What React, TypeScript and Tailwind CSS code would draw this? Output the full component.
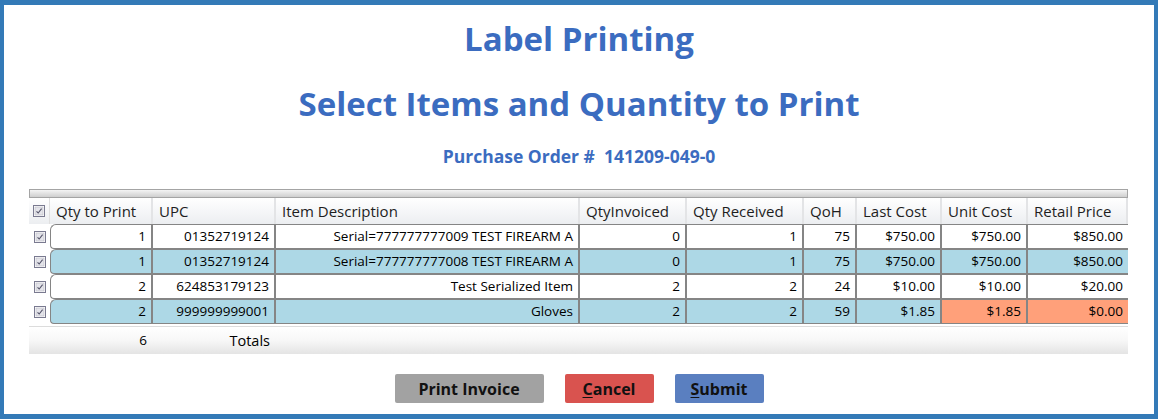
import React from "react";

const font = { fontFamily: '"Open Sans", "Noto Sans", sans-serif' };

const cols = [21, 103, 123, 304, 107, 117, 53, 85, 86, 100];

type Row = {
  qty: string;
  upc: string;
  desc: string;
  inv: string;
  rec: string;
  qoh: string;
  last: string;
  unit: string;
  retail: string;
  blue: boolean;
  warn?: boolean;
};

const rows: Row[] = [
  { qty: "1", upc: "01352719124", desc: "Serial=777777777009 TEST FIREARM A", inv: "0", rec: "1", qoh: "75", last: "$750.00", unit: "$750.00", retail: "$850.00", blue: false },
  { qty: "1", upc: "01352719124", desc: "Serial=777777777008 TEST FIREARM A", inv: "0", rec: "1", qoh: "75", last: "$750.00", unit: "$750.00", retail: "$850.00", blue: true },
  { qty: "2", upc: "624853179123", desc: "Test Serialized Item", inv: "2", rec: "2", qoh: "24", last: "$10.00", unit: "$10.00", retail: "$20.00", blue: false },
  { qty: "2", upc: "999999999001", desc: "Gloves", inv: "2", rec: "2", qoh: "59", last: "$1.85", unit: "$1.85", retail: "$0.00", blue: true, warn: true },
];

function Check() {
  return (
    <svg width="12" height="12" viewBox="0 0 12 12">
      <rect x="0.5" y="0.5" width="11" height="11" fill="#fff" stroke="#7a7a90" />
      <rect x="2" y="2" width="8" height="8" fill="#e4e4ea" stroke="#b8b8c4" strokeWidth="0.6" />
      <path d="M3.5 6.3 L5.2 8 L8.6 3.6" fill="none" stroke="#55556a" strokeWidth="1.1" />
    </svg>
  );
}

const headers = ["Qty to Print", "UPC", "Item Description", "QtyInvoiced", "Qty Received", "QoH", "Last Cost", "Unit Cost", "Retail Price"];

export default function App() {
  return (
    <div
      className="w-[1158px] h-[419px] bg-white border-solid border-[#337ab7] border-t-[5px] border-x-4 border-b-[5px] flex flex-col"
      style={font}
    >
      <div className="flex flex-col items-center text-[#3b6cc0] font-bold">
        <div className="mt-[13px] text-[33px] leading-[42px]">Label Printing</div>
        <div className="mt-[23px] text-[33px] leading-[42px]">Select Items and Quantity to Print</div>
        <div className="mt-[19px] text-[17.5px] leading-[24px] whitespace-pre">Purchase Order #  141209-049-0</div>
      </div>

      <div className="ml-[25px] mt-[21px] w-[1099px] flex flex-col text-[13.5px] text-black">
        <div className="h-[9px] border border-[#a4a4a4] bg-gradient-to-b from-[#f4f4f4] to-[#cfcfcf]" />
        <div className="flex h-[26px] bg-gradient-to-b from-[#ffffff] to-[#eceef1]">
          <div className="w-[21px] flex items-center justify-center border-r border-[#e0e0e0]">
            <Check />
          </div>
          {headers.map((h, i) => (
            <div
              key={h}
              className="flex items-center pl-[6px] border-r-2 border-[#e3e4e6] text-[15px] text-[#1e1e1e]"
              style={{ width: cols[i + 1] }}
            >
              {h}
            </div>
          ))}
        </div>
        {rows.map((r, ri) => {
          const vals = [r.qty, r.upc, r.desc, r.inv, r.rec, r.qoh, r.last, r.unit, r.retail];
          return (
            <div key={ri} className="flex h-[25px] bg-white">
              <div className="w-[21px] flex items-center justify-center">
                <Check />
              </div>
              <div
                className={`flex flex-1 border border-r-0 border-[#858585] rounded-tl-[6px] rounded-bl-[4px] overflow-hidden ${r.blue ? "bg-[#add8e6]" : "bg-white"}`}
              >
                {vals.map((v, i) => {
                  const warn = r.warn && i >= 7;
                  return (
                    <div
                      key={i}
                      className={`flex items-center justify-end pr-[5px] ${i < 8 ? "border-r-2 border-[#858585]" : ""} ${warn ? "bg-[#ffa07a]" : ""}`}
                      style={{ width: i === 0 ? cols[1] - 1 : cols[i + 1] }}
                    >
                      {v}
                    </div>
                  );
                })}
              </div>
            </div>
          );
        })}
        <div className="mt-[2px] h-[28px] flex border-t border-[#dcdcdc] bg-gradient-to-b from-[#ffffff] via-[#f7f7f7] to-[#e4e4e4]">
          <div className="w-[21px]" />
          <div className="w-[103px] flex items-center justify-end pr-[6px]">6</div>
          <div className="w-[123px] flex items-center justify-end pr-[6px] text-[14.5px]">Totals</div>
        </div>
      </div>

      <div className="mt-[20px] flex justify-center gap-[21px] font-bold text-[16px] text-[#111]">
        <div className="w-[149px] h-[29px] bg-[#a2a2a2] rounded-[2px] flex items-center justify-center">Print Invoice</div>
        <div className="w-[89px] h-[29px] bg-[#d9534f] rounded-[2px] flex items-center justify-center">
          <span className="underline underline-offset-2">C</span>ancel
        </div>
        <div className="w-[89px] h-[29px] bg-[#5a7fc0] rounded-[2px] flex items-center justify-center">
          <span className="underline underline-offset-2">S</span>ubmit
        </div>
      </div>
    </div>
  );
}
